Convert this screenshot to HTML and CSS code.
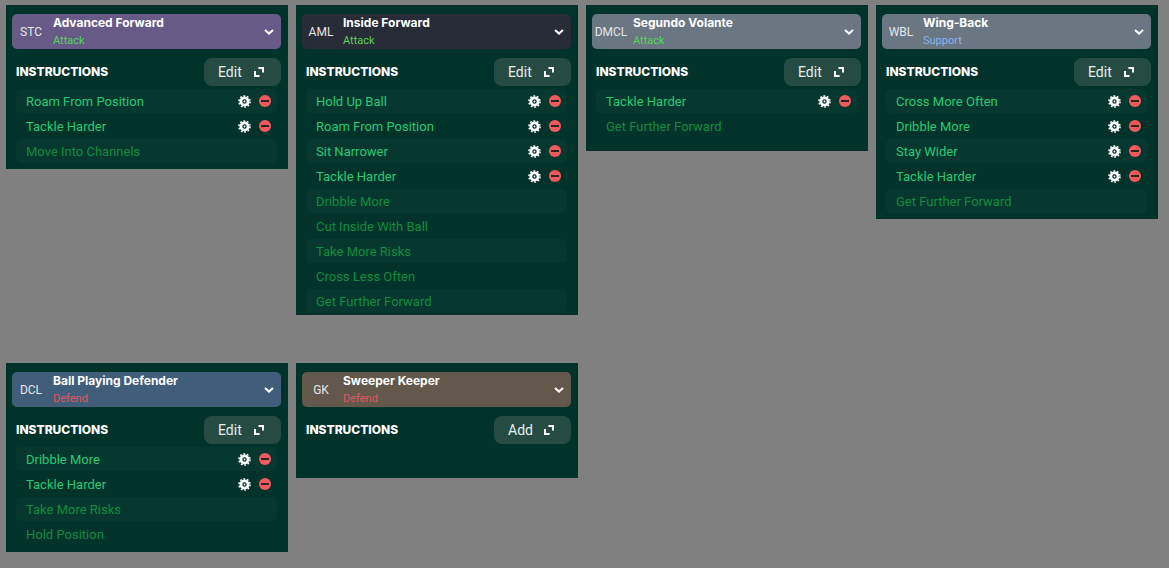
FILE: index.html
```html
<!DOCTYPE html>
<html lang="en">
  <head>
    <meta charset="UTF-8" />
    <meta name="viewport" content="width=device-width, initial-scale=1.0" />
    <title>Player instructions</title>
    <link rel="stylesheet" href="styles.css">
  </head>

  <body>
    <!-- shared icons -->
    <svg class="sprite" aria-hidden="true">
      <symbol id="chevron" viewBox="0 0 10 6">
        <path d="M1 1l4 3.6L9 1" fill="none" stroke="currentColor" stroke-width="2" />
      </symbol>
      <symbol id="popout" viewBox="0 0 12 12">
        <path d="M5.5 2H10v4.5M2 5v5h4.5" fill="none" stroke="currentColor" stroke-width="2" />
      </symbol>
      <symbol id="gear" viewBox="0 0 14 14">
        <circle cx="7" cy="7" r="6" fill="none" stroke="currentColor" stroke-width="1.6" stroke-dasharray="1.885 1.885" />
        <circle cx="7" cy="7" r="3.9" fill="none" stroke="currentColor" stroke-width="3" />
        <circle cx="7" cy="7" r="1" fill="currentColor" />
      </symbol>
      <symbol id="minus" viewBox="0 0 12 12">
        <circle cx="6" cy="6" r="6" fill="currentColor" />
        <path d="M2 6h8" stroke="#2b2420" stroke-width="2" />
      </symbol>
    </svg>

    <main class="board">
      <section class="panel">
        <button class="role role--purple" aria-haspopup="listbox">
          <span class="role__pos">STC</span>
          <span class="role__text">
            <span class="role__name">Advanced Forward</span>
            <span class="role__duty attack">Attack</span>
          </span>
          <svg class="role__arrow"><use href="#chevron" /></svg>
        </button>
        <div class="panel__head">
          <h2>Instructions</h2>
          <button class="btn">Edit <svg><use href="#popout" /></svg></button>
        </div>
        <ul class="list">
          <li>Roam From Position
            <button class="icon gear" aria-label="Settings"><svg><use href="#gear" /></svg></button>
            <button class="icon remove" aria-label="Remove"><svg><use href="#minus" /></svg></button>
          </li>
          <li>Tackle Harder
            <button class="icon gear" aria-label="Settings"><svg><use href="#gear" /></svg></button>
            <button class="icon remove" aria-label="Remove"><svg><use href="#minus" /></svg></button>
          </li>
          <li class="fixed">Move Into Channels</li>
        </ul>
      </section>

      <section class="panel panel--long">
        <button class="role role--dark" aria-haspopup="listbox">
          <span class="role__pos">AML</span>
          <span class="role__text">
            <span class="role__name">Inside Forward</span>
            <span class="role__duty attack">Attack</span>
          </span>
          <svg class="role__arrow"><use href="#chevron" /></svg>
        </button>
        <div class="panel__head">
          <h2>Instructions</h2>
          <button class="btn">Edit <svg><use href="#popout" /></svg></button>
        </div>
        <ul class="list">
          <li>Hold Up Ball
            <button class="icon gear" aria-label="Settings"><svg><use href="#gear" /></svg></button>
            <button class="icon remove" aria-label="Remove"><svg><use href="#minus" /></svg></button>
          </li>
          <li>Roam From Position
            <button class="icon gear" aria-label="Settings"><svg><use href="#gear" /></svg></button>
            <button class="icon remove" aria-label="Remove"><svg><use href="#minus" /></svg></button>
          </li>
          <li>Sit Narrower
            <button class="icon gear" aria-label="Settings"><svg><use href="#gear" /></svg></button>
            <button class="icon remove" aria-label="Remove"><svg><use href="#minus" /></svg></button>
          </li>
          <li>Tackle Harder
            <button class="icon gear" aria-label="Settings"><svg><use href="#gear" /></svg></button>
            <button class="icon remove" aria-label="Remove"><svg><use href="#minus" /></svg></button>
          </li>
          <li class="fixed">Dribble More</li>
          <li class="fixed">Cut Inside With Ball</li>
          <li class="fixed">Take More Risks</li>
          <li class="fixed">Cross Less Often</li>
          <li class="fixed">Get Further Forward</li>
        </ul>
      </section>

      <section class="panel panel--short">
        <button class="role role--grey" aria-haspopup="listbox">
          <span class="role__pos">DMCL</span>
          <span class="role__text">
            <span class="role__name">Segundo Volante</span>
            <span class="role__duty attack">Attack</span>
          </span>
          <svg class="role__arrow"><use href="#chevron" /></svg>
        </button>
        <div class="panel__head">
          <h2>Instructions</h2>
          <button class="btn">Edit <svg><use href="#popout" /></svg></button>
        </div>
        <ul class="list">
          <li>Tackle Harder
            <button class="icon gear" aria-label="Settings"><svg><use href="#gear" /></svg></button>
            <button class="icon remove" aria-label="Remove"><svg><use href="#minus" /></svg></button>
          </li>
          <li class="fixed">Get Further Forward</li>
        </ul>
      </section>

      <section class="panel">
        <button class="role role--grey" aria-haspopup="listbox">
          <span class="role__pos">WBL</span>
          <span class="role__text">
            <span class="role__name">Wing-Back</span>
            <span class="role__duty support">Support</span>
          </span>
          <svg class="role__arrow"><use href="#chevron" /></svg>
        </button>
        <div class="panel__head">
          <h2>Instructions</h2>
          <button class="btn">Edit <svg><use href="#popout" /></svg></button>
        </div>
        <ul class="list">
          <li>Cross More Often
            <button class="icon gear" aria-label="Settings"><svg><use href="#gear" /></svg></button>
            <button class="icon remove" aria-label="Remove"><svg><use href="#minus" /></svg></button>
          </li>
          <li>Dribble More
            <button class="icon gear" aria-label="Settings"><svg><use href="#gear" /></svg></button>
            <button class="icon remove" aria-label="Remove"><svg><use href="#minus" /></svg></button>
          </li>
          <li>Stay Wider
            <button class="icon gear" aria-label="Settings"><svg><use href="#gear" /></svg></button>
            <button class="icon remove" aria-label="Remove"><svg><use href="#minus" /></svg></button>
          </li>
          <li>Tackle Harder
            <button class="icon gear" aria-label="Settings"><svg><use href="#gear" /></svg></button>
            <button class="icon remove" aria-label="Remove"><svg><use href="#minus" /></svg></button>
          </li>
          <li class="fixed">Get Further Forward</li>
        </ul>
      </section>

      <section class="panel">
        <button class="role role--blue" aria-haspopup="listbox">
          <span class="role__pos">DCL</span>
          <span class="role__text">
            <span class="role__name">Ball Playing Defender</span>
            <span class="role__duty defend">Defend</span>
          </span>
          <svg class="role__arrow"><use href="#chevron" /></svg>
        </button>
        <div class="panel__head">
          <h2>Instructions</h2>
          <button class="btn">Edit <svg><use href="#popout" /></svg></button>
        </div>
        <ul class="list">
          <li>Dribble More
            <button class="icon gear" aria-label="Settings"><svg><use href="#gear" /></svg></button>
            <button class="icon remove" aria-label="Remove"><svg><use href="#minus" /></svg></button>
          </li>
          <li>Tackle Harder
            <button class="icon gear" aria-label="Settings"><svg><use href="#gear" /></svg></button>
            <button class="icon remove" aria-label="Remove"><svg><use href="#minus" /></svg></button>
          </li>
          <li class="fixed">Take More Risks</li>
          <li class="fixed">Hold Position</li>
        </ul>
      </section>

      <section class="panel panel--empty">
        <button class="role role--brown" aria-haspopup="listbox">
          <span class="role__pos">GK</span>
          <span class="role__text">
            <span class="role__name">Sweeper Keeper</span>
            <span class="role__duty defend">Defend</span>
          </span>
          <svg class="role__arrow"><use href="#chevron" /></svg>
        </button>
        <div class="panel__head">
          <h2>Instructions</h2>
          <button class="btn">Add <svg><use href="#popout" /></svg></button>
        </div>
      </section>
    </main>
  </body>
</html>
```
FILE: styles.css
```css
* {
  box-sizing: border-box;
}

body {
  margin: 0;
  background-color: #808080;
  font-family: Roboto, "Liberation Sans", sans-serif;
}

button {
  border: 0;
  font-family: inherit;
  cursor: pointer;
}

.sprite {
  display: none;
}

.board {
  display: grid;
  grid-template-columns: repeat(4, 1fr);
  align-items: start;
  gap: 48px 8px;
  padding: 5px 11px 5px 6px;
}
@media (max-width: 991.98px) {
  .board {
    grid-template-columns: repeat(2, 1fr);
    row-gap: 8px;
  }
}
@media (max-width: 575.98px) {
  .board {
    grid-template-columns: 1fr;
  }
}

.panel {
  padding: 9px 7px 6px 6px;
  background-color: #02332b;
}
.panel--long {
  padding-bottom: 2px;
}
.panel--short {
  padding-bottom: 13px;
}
.panel--empty {
  padding-bottom: 34px;
}

/* role selector */
.role {
  display: flex;
  align-items: center;
  width: 100%;
  height: 35px;
  padding: 0 7px 0 0;
  border-radius: 5px;
  color: #fff;
  text-align: left;
}
.role--purple {
  background-color: #675a86;
}
.role--dark {
  background-color: #272c36;
}
.role--grey {
  background-color: #6a7682;
}
.role--blue {
  background-color: #405e79;
}
.role--brown {
  background-color: #62594c;
}

.role__pos {
  width: 38px;
  color: #e4e6e8;
  font-size: 12px;
  text-align: center;
}

.role__text {
  flex: 1;
  padding-left: 3px;
}

.role__name {
  display: block;
  font-family: Inter, sans-serif;
  font-size: 12px;
  font-weight: 700;
  line-height: 18px;
}

.role__duty {
  display: block;
  font-size: 11px;
  line-height: 17px;
}
.attack {
  color: #5bd35b;
}
.support {
  color: #86b4ee;
}
.defend {
  color: #e0565c;
}

.role__arrow {
  width: 10px;
  height: 6px;
}

/* heading row */
.panel__head {
  display: flex;
  justify-content: space-between;
  align-items: center;
  margin-top: 9px;
  padding-left: 4px;
}
.panel__head h2 {
  margin: 0;
  color: #fff;
  font-family: Inter, sans-serif;
  font-size: 12px;
  font-weight: 800;
  line-height: 24px;
  text-transform: uppercase;
}

.btn {
  display: flex;
  justify-content: space-between;
  align-items: center;
  width: 77px;
  height: 28px;
  padding: 0 16px 0 14px;
  border-radius: 8px;
  background-color: #254b43;
  color: #e6efec;
  font-size: 14px;
}
.btn svg {
  width: 12px;
  height: 12px;
  color: #fff;
}

/* instructions */
.list {
  display: flex;
  flex-direction: column;
  gap: 1px;
  margin: 3px 4px 0;
  padding: 0;
  list-style: none;
}
.list li {
  display: flex;
  align-items: center;
  gap: 8px;
  height: 24px;
  padding: 0 6px 0 10px;
  border-radius: 5px;
  color: #2bc873;
  font-size: 13px;
}
.list li:nth-child(odd) {
  background-color: #06382f;
}
.list .fixed {
  color: #128c3c;
}

.icon {
  display: flex;
  padding: 0;
  background-color: transparent;
}
.icon svg {
  width: 12px;
  height: 12px;
}
.gear {
  margin-left: auto;
  color: #fff;
}
.gear svg {
  width: 13px;
  height: 13px;
}
.remove {
  color: #f15a5c;
}
```
